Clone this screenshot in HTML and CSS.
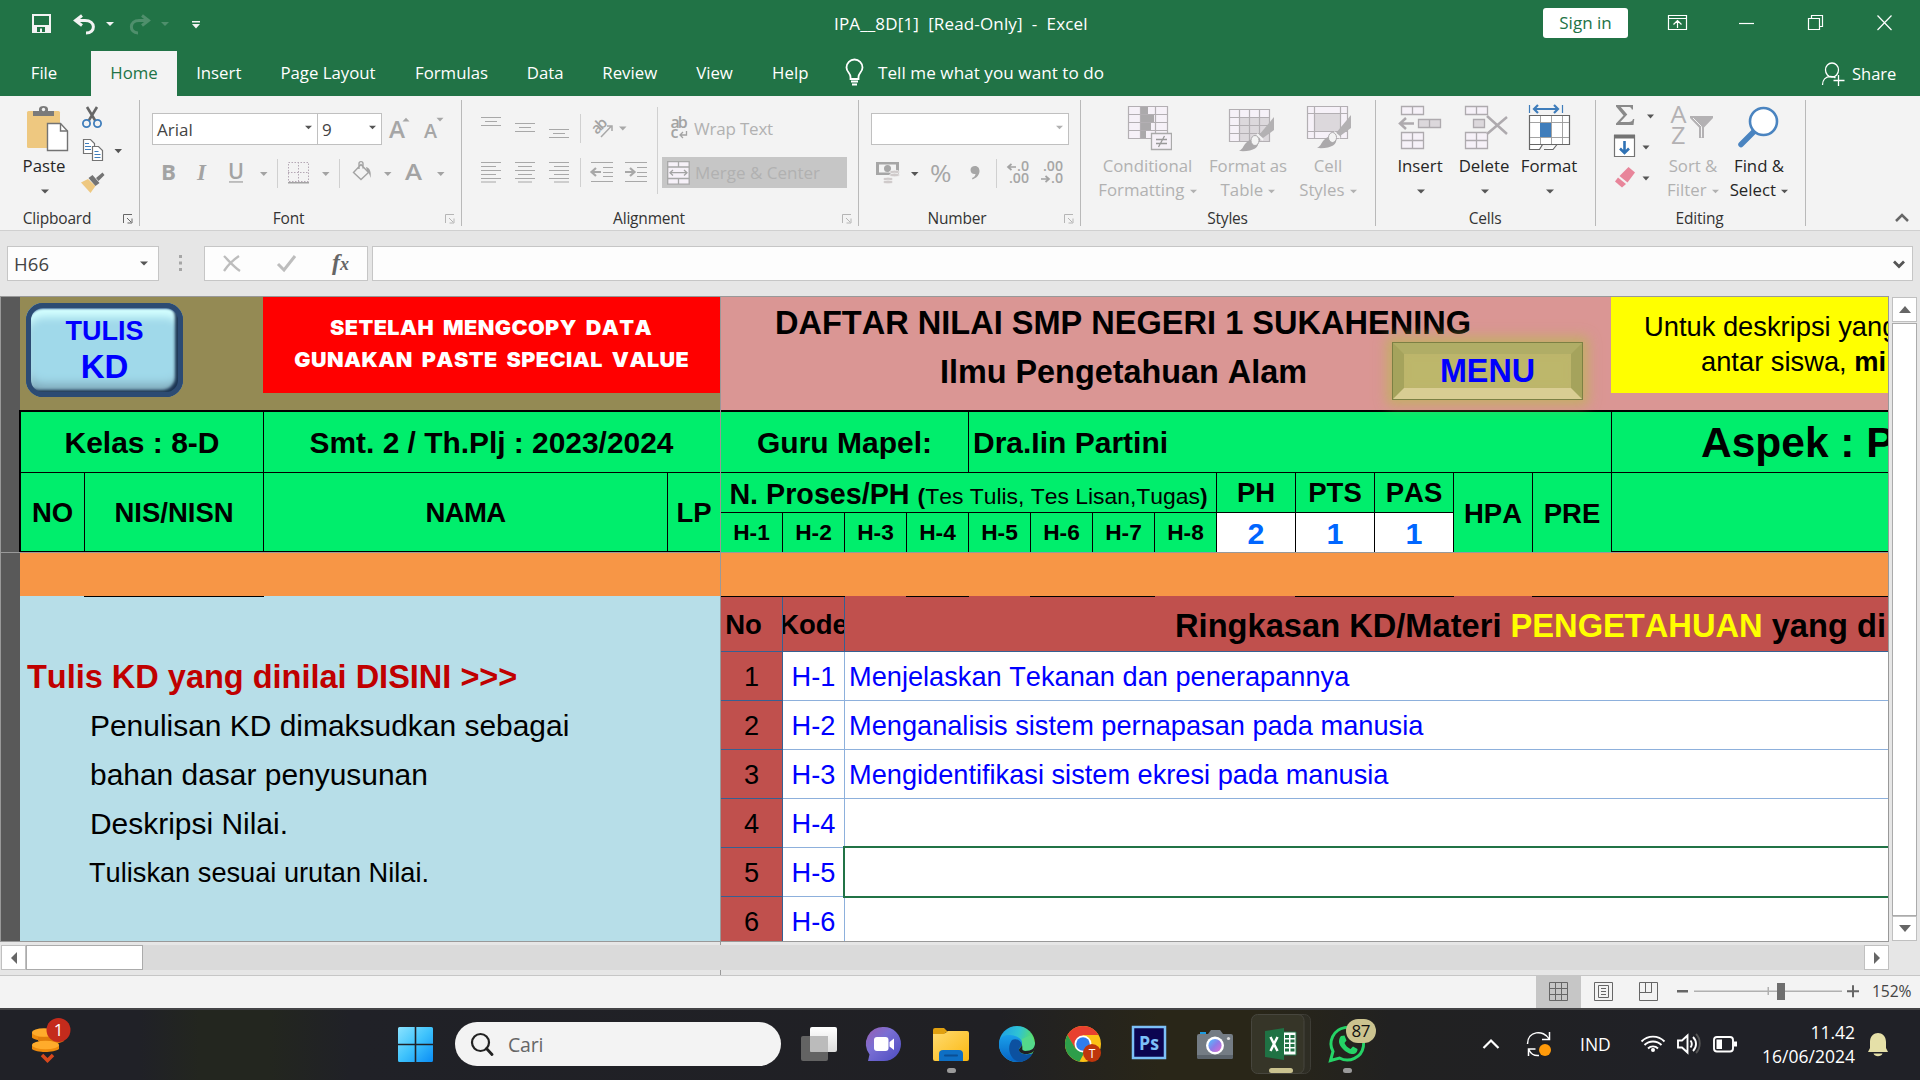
FILE: index.html
```html
<!DOCTYPE html>
<html lang="en">
<head>
<meta charset="utf-8">
<title>IPA__8D[1] [Read-Only] - Excel</title>
<link rel="stylesheet" href="styles.css">
</head>
<body>
<svg class="defs" width="0" height="0" aria-hidden="true">
  <defs>
    <symbol id="caret" viewBox="0 0 8 5"><path d="M0 .5h8L4 4.5z"/></symbol>
    <symbol id="launch" viewBox="0 0 10 10"><path d="M.5 9V.5H9M4 4l4 4M9 4.500V9H4.500" fill="none" stroke="currentColor"/></symbol>
    <linearGradient id="gWin" x1="0" y1="0" x2="1" y2="1"><stop offset="0" stop-color="#8be3ff"/><stop offset=".5" stop-color="#3fc3fc"/><stop offset="1" stop-color="#0a8df5"/></linearGradient>
    <linearGradient id="gTask" x1="0" y1="0" x2="0" y2="1"><stop offset="0" stop-color="#fff"/><stop offset="1" stop-color="#dcdcdc"/></linearGradient>
    <linearGradient id="gChat" x1="0" y1="0" x2="1" y2="1"><stop offset="0" stop-color="#9a5fb0"/><stop offset=".4" stop-color="#7a6fd4"/><stop offset="1" stop-color="#4b4bc0"/></linearGradient>
    <linearGradient id="gFold" x1="0" y1="0" x2="1" y2="1"><stop offset="0" stop-color="#ffdb70"/><stop offset="1" stop-color="#fbb810"/></linearGradient>
    <linearGradient id="gEdge" x1="0" y1="0" x2="1" y2=".3"><stop offset="0" stop-color="#1c9ce8"/><stop offset=".55" stop-color="#2fc3d4"/><stop offset="1" stop-color="#5fe05a"/></linearGradient>
    <linearGradient id="gEdge2" x1="0" y1="0" x2="0" y2="1"><stop offset="0" stop-color="#1aa0ea"/><stop offset="1" stop-color="#0663c4"/></linearGradient>
    <linearGradient id="gCam" x1="0" y1="0" x2="1" y2="1"><stop offset="0" stop-color="#4cc3ff"/><stop offset=".5" stop-color="#8d7be8"/><stop offset="1" stop-color="#e06bd0"/></linearGradient>
  </defs>
</svg>

<header class="titlebar">
  <svg class="qat" viewBox="0 0 220 51" width="220" height="51">
    <g fill="none" stroke="#f3f3f3">
      <path d="M33 15h17v17H33z" stroke-width="2"/>
      <path d="M33 25.500h17v6.500H33z" fill="#f3f3f3"/>
    </g>
    <path d="M37 27h8v5h-3v-3.500h-2V32h-3z" fill="#217346"/>
    <path d="M77 20.500h8c11 0 11 12.500 1 12.500M82 15.500l-6.500 5 6.500 5" fill="none" stroke="#f3f3f3" stroke-width="3"/>
    <path d="M106 22h8l-4 4z" fill="#f3f3f3"/>
    <g fill="#4f8f6c"><path d="M147 20.500h-8c-10 0-10 12.500-1 12.500M142 15.500l6.500 5-6.500 5" fill="none" stroke="#4f8f6c" stroke-width="3"/><path d="M161 22h8l-4 4z"/></g>
    <path d="M192 21h8v1.500h-8zM192 24h8l-4 4.500z" fill="#f3f3f3"/>
  </svg>
  <div class="doc-title">IPA__8D[1]&nbsp; [Read-Only]&nbsp; -&nbsp; Excel</div>
  <button class="signin">Sign in</button>
  <svg class="winctl" viewBox="1628 0 292 38" width="292" height="38" fill="none" stroke="#fff" stroke-width="1.200">
    <path d="M1668.500 15.500h18v14h-18zM1668.500 18.500h18M1677.500 28v-7.500M1673.500 24.500l4-4 4 4"/>
    <path d="M1739 23.500h15"/>
    <path d="M1808.500 18.500h11v11h-11zM1811.500 18v-2.500h11v11h-2.500"/>
    <path d="M1877.500 15.500l14 14.500M1891.500 15.500l-14 14.500"/>
  </svg>
</header>

<nav class="tabs">
  <span class="t-file">File</span><span class="gap"></span><span class="active">Home</span><span>Insert</span><span>Page Layout</span><span>Formulas</span><span>Data</span><span>Review</span><span>View</span><span>Help</span>
  <svg viewBox="828 51 50 45" width="50" height="45" fill="none" stroke="#fff" stroke-width="1.800"><path d="M850.500 79v-2c0-4-4-5-4-9.500a8 8 0 0 1 16 0c0 4.500-4 5.500-4 9.500v2zM851 81.500h7M852 84.500h5"/></svg>
  <span class="tell">Tell me what you want to do</span>
  <svg viewBox="1814 51 36 45" width="36" height="45" fill="none" stroke="#fff" stroke-width="1.300"><ellipse cx="1832" cy="70" rx="6.500" ry="7"/><path d="M1822.500 85c0-5 3-8.500 8-8.500 2 0 4 .5 5 1.500M1838.500 75v11M1833.500 80.500h11"/></svg>
  <span class="share">Share</span>
</nav>

<section class="ribbon">
  <div class="group g-clip">
    <div class="body">
      <div class="big paste">
        <svg viewBox="20 96 50 57" width="50" height="57"><rect x="27" y="111" width="33" height="37" rx="1.500" fill="#eec880"/><path d="M33 116v-5h6v-2c0-2 2-3 4.500-3s4.500 1 4.500 3v2h6v5z" fill="#7a7a7a"/><circle cx="43.500" cy="109.500" r="1.700" fill="#f3f3f3"/><path d="M47.500 123.500h13l7 7.500v19.500h-20z" fill="#fff" stroke="#737373" stroke-width="1.400"/><path d="M60.500 123.500v7.500h7" fill="none" stroke="#737373" stroke-width="1.400"/></svg>
        <span>Paste</span><span><svg class="car" width="8" height="5"><use href="#caret"/></svg></span>
      </div>
      <svg viewBox="76 96 52 104" width="52" height="104">
        <path d="M87 107l8.500 14M97 107l-8.500 14" stroke="#666" stroke-width="2.600" fill="none"/>
        <g fill="none" stroke="#3f7dbb" stroke-width="1.800"><circle cx="86.500" cy="123.500" r="3.600"/><circle cx="97.500" cy="123.500" r="3.600"/></g>
        <g fill="#fff" stroke="#737373" stroke-width="1.200"><path d="M83.500 139.500h7l4 4v10h-11z"/><path d="M92.500 146.500h6l4 4v10h-10z"/></g>
        <path d="M85 143.500h4M85 146.500h6M85 149.500h6M94.500 151.500h4M94.500 154.500h6M94.500 157.500h6" stroke="#3f7dbb" stroke-width="1.200"/>
        <path d="M114.500 149h7.500l-3.700 4.300z" fill="#555"/>
        <path d="M81 182.500l7-3.500 7.500 7-5 7z" fill="#eec880"/><path d="M88.500 178l4-3 7 8-4 3zM96 178l6.500-5.500 2 2.500-6 6z" fill="#737373"/>
      </svg>
    </div>
    <div class="cap">Clipboard<svg class="lch dark" width="10" height="10"><use href="#launch"/></svg></div>
  </div>

  <div class="group g-font">
    <div class="body col">
      <div class="row1">
        <div class="combo fam">Arial<svg class="car" width="7" height="5"><use href="#caret"/></svg></div><div class="combo size">9<svg class="car" width="7" height="5"><use href="#caret"/></svg></div>
        <svg viewBox="382 108 70 37" width="70" height="37"><g fill="#a6a6a6"><text x="389" y="138" font-size="24" class="ic sb" textLength="16" lengthAdjust="spacingAndGlyphs">A</text><path d="M402.500 121.500h7l-3.500-3.800z"/><text x="424" y="138" font-size="19" class="ic sb" textLength="13" lengthAdjust="spacingAndGlyphs">A</text><path d="M436.500 117.700h7l-3.500 3.800z"/></g></svg>
      </div>
      <svg viewBox="152 156 305 34" width="305" height="34" fill="#a3a3a3">
        <text x="161" y="180" font-size="22" class="ic b" textLength="15" lengthAdjust="spacingAndGlyphs">B</text><text x="197" y="180" font-size="23" class="serif" font-style="italic" font-weight="bold">I</text><text x="228" y="179" font-size="21" class="ic sb" textLength="16" lengthAdjust="spacingAndGlyphs">U</text><path d="M229 181.300h14v1.300h-14z"/>
        <path d="M260 172h7.500l-3.700 4zM322 172h7.500l-3.700 4zM384 172h7.500l-3.700 4zM437 172h7.500l-3.700 4z"/>
        <path d="M277 159h1v29h-1zM339 159h1v29h-1z" fill="#d0d0d0"/>
        <path d="M288.500 162.500h20v19h-20zM298.500 162v20M288 172.500h21" fill="none" stroke="#b5a8b5" stroke-dasharray="1.500 1.500"/><path d="M288 182h21v1.500h-21z"/>
        <path d="M353.500 172.500l7.500-8 7.500 8-7.500 7zM359 169v-5.500c0-2.500 4-2.500 4 0v5" fill="none" stroke="#a3a3a3" stroke-width="1.400"/><path d="M366 167c4 1 5.500 5 4.500 11-1-4-2-6-3.500-7z"/>
        <text x="405" y="180" font-size="22" class="ic sb" textLength="17" lengthAdjust="spacingAndGlyphs">A</text>
      </svg>
    </div>
    <div class="cap">Font<svg class="lch" width="10" height="10"><use href="#launch"/></svg></div>
  </div>

  <div class="group g-align">
    <div class="body">
      <svg viewBox="475 96 183 104" width="183" height="104">
        <g stroke="#a8a8a8" stroke-width="1.200" fill="none">
          <path d="M481 117.500h20M485 121.500h12M481 125.500h20M515 123.500h20M519 127.500h12M515 131.500h20M549 129.500h20M553 133.500h12M549 137.500h20"/>
          <path d="M481 162.500h20M481 166.500h15M481 170.500h20M481 174.500h15M481 178.500h20M481 182h15M515 162.500h20M518 166.500h14M515 170.500h20M518 174.500h14M515 178.500h20M518 182h14M549 162.500h20M554 166.500h15M549 170.500h20M554 174.500h15M549 178.500h20M554 182h15"/>
          <path d="M591 162.500h22M603 167.500h10M603 172.500h10M603 176.500h10M591 181.500h22M625 162.500h22M637 167.500h10M637 172.500h10M637 176.500h10M625 181.500h22"/>
          <path d="M601 172h-9M596 168l-4.500 4 4.500 4M625 172h8.500M630 168l4.500 4-4.500 4" stroke-width="2.200"/>
          <path d="M601 137l10.500-11M607 126h5v5" stroke-width="1.500"/>
        </g>
        <text x="0" y="0" font-size="15" class="ic sb" fill="#a3a3a3" transform="translate(597 135) rotate(-45)" textLength="16">ab</text>
        <path d="M619 126.500h7.500l-3.700 4z" fill="#a8a8a8"/>
        <path d="M580 114h1v29h-1zM580 158h1v29h-1zM657 107h1v87h-1z" fill="#d0d0d0"/>
      </svg>
      <div class="wrapcol">
        <div class="wraptext"><svg viewBox="670 113 20 28" width="20" height="28" fill="#a3a3a3"><text x="670.500" y="128" font-size="16" class="ic sb" textLength="17">ab</text><text x="670.500" y="138" font-size="16" class="ic sb">c</text><path d="M686.500 131v4h-6M683 132l-3 3 3 3" fill="none" stroke="#a3a3a3" stroke-width="1.300"/></svg>Wrap Text</div>
        <div class="merge"><svg viewBox="667 160 23 24" width="23" height="24"><path d="M667.700 160.700h21.500v22.500h-21.500zM678.500 161v5M678.500 178v5M668 166h21.500M668 177.500h21.500" fill="#f6f1f8" stroke="#a8a8a8" stroke-width="1.300"/><path d="M670 171.700h17M673 169l-3 2.700 3 2.700M684 169l3 2.700-3 2.700" fill="none" stroke="#a3a3a3" stroke-width="1.300"/></svg>Merge &amp; Center</div>
      </div>
    </div>
    <div class="cap">Alignment<svg class="lch" width="10" height="10"><use href="#launch"/></svg></div>
  </div>

  <div class="group g-num">
    <div class="body col">
      <div class="row1"><div class="combo num"><svg class="car" width="7" height="5"><use href="#caret"/></svg></div></div>
      <svg viewBox="871 156 200 34" width="200" height="34" fill="#a6a6a6">
        <path d="M876 162h23v13h-23z"/><path d="M879 164.500h17v8h-17z" fill="#f3f3f3"/><circle cx="887.500" cy="168.500" r="3.500"/><g fill="#cfcaca" stroke="#f3f3f3" stroke-width=".7"><ellipse cx="894.500" cy="172" rx="5" ry="1.800"/><ellipse cx="894.500" cy="175" rx="5" ry="1.800"/><ellipse cx="888" cy="179" rx="5" ry="1.800"/><ellipse cx="888" cy="182" rx="5" ry="1.800"/></g>
        <path d="M911 172h7.500l-3.700 4z" fill="#555"/>
        <text x="930" y="182" font-size="24" class="ic" textLength="21.500" lengthAdjust="spacingAndGlyphs">%</text>
        <path d="M975 166c3 0 4.500 2.500 4.500 5 0 4-3 7-7 8.500l-.5-1.500c2.500-1 3.500-2.500 3.500-4-3 .5-5-1.500-5-4s2-4 4.500-4z"/>
        <path d="M996 159h1v29h-1z" fill="#d0d0d0"/>
        <g font-size="13.500" class="ic sb"><text x="1017" y="171" textLength="12" lengthAdjust="spacingAndGlyphs">.0</text><text x="1009" y="183" textLength="20" lengthAdjust="spacingAndGlyphs">.00</text><text x="1043" y="171" textLength="20" lengthAdjust="spacingAndGlyphs">.00</text><text x="1051" y="183" textLength="12" lengthAdjust="spacingAndGlyphs">.0</text></g>
        <path d="M1016 167h-7M1011.500 164l-3.500 3 3.500 3M1041 179h7M1045.500 176l3.500 3-3.500 3" fill="none" stroke="#a3a3a3" stroke-width="1.700"/>
      </svg>
    </div>
    <div class="cap">Number<svg class="lch" width="10" height="10"><use href="#launch"/></svg></div>
  </div>

  <div class="group g-styles">
    <div class="body">
      <div class="big dim w113">
        <svg viewBox="1125 96 48 57" width="48" height="57"><path d="M1129.500 106.500h39v32h-39zM1129.500 114.500h39M1129.500 122.500h39M1129.500 130.500h39M1141.500 106v32M1156.500 106v32" fill="#f6f1f8" stroke="#b3afb3" stroke-width="1.200"/><path d="M1142 107h7v7h-7zM1142 115h13v7h-13zM1142 123h10v7h-10zM1142 131h5v7h-5z" fill="#aba9ab"/><path d="M1152.500 133.500h20v16h-20z" fill="#f6f1f8" stroke="#aaa" stroke-width="1.300"/><path d="M1157 139.500h11M1157 143.500h11M1165.500 136l-6 11" stroke="#999" stroke-width="1.300"/></svg>
        <span class="ls-cond">Conditional</span><span>Formatting <svg class="car" width="7" height="5"><use href="#caret"/></svg></span>
      </div>
      <div class="big dim w88">
        <svg viewBox="1223 96 52 57" width="52" height="57"><path d="M1230.500 109.500h40v32h-40z" fill="#f6f1f8"/><path d="M1240.500 117.500h30v24h-30z" fill="#dcd8dc"/><path d="M1230.500 109.500h40v32h-40zM1230.500 117.500h40M1230.500 125.500h40M1230.500 133.500h40M1240.500 109v32M1250.500 109v32M1260.500 109v32" fill="none" stroke="#b3afb3" stroke-width="1.200"/><path d="M1275 117v13l-11 8-4-3z" fill="#b3b1b3"/><path d="M1258 134l6 6" stroke="#f3f3f3" stroke-width="2"/><path d="M1240 151c4-2 4-5 7-8 3-4 9-5 12-2 2 7-6 11-19 10z" fill="#aba9ab"/><ellipse cx="1256" cy="140.500" rx="4" ry="5" fill="#f3f3f3" stroke="#aba9ab"/></svg>
        <span class="ls-fmt">Format as</span><span>Table <svg class="car" width="7" height="5"><use href="#caret"/></svg></span>
      </div>
      <div class="big dim w72">
        <svg viewBox="1303 96 52 57" width="52" height="57"><path d="M1308.500 106.500h40v32h-40z" fill="#f6f1f8"/><path d="M1315.500 113.500h26v18h-26z" fill="#dcd8dc"/><path d="M1308.500 106.500h40v32h-40zM1308.500 113.500h40M1308.500 131.500h40M1315.500 106v32M1341.500 106v32" fill="none" stroke="#b3afb3" stroke-width="1.200"/><path d="M1352 115v13l-11 8-4-3z" fill="#b3b1b3"/><path d="M1335 132l6 6" stroke="#f3f3f3" stroke-width="2"/><path d="M1318 148c4-2 4-5 7-8 3-4 9-5 12-2 2 7-6 11-19 10z" fill="#aba9ab"/><ellipse cx="1333.500" cy="137.500" rx="4" ry="5" fill="#f3f3f3" stroke="#aba9ab"/></svg>
        <span>Cell</span><span>Styles <svg class="car" width="7" height="5"><use href="#caret"/></svg></span>
      </div>
    </div>
    <div class="cap">Styles</div>
  </div>

  <div class="group g-cells">
    <div class="body">
      <div class="big w64">
        <svg viewBox="1396 96 48 57" width="48" height="57"><g fill="#f6f1f8" stroke="#aeaaae" stroke-width="1.300"><path d="M1401.500 106.500h22v8h-22zM1412.500 106.500v8M1401.500 132.500h22v16h-22zM1412.500 132.500v16M1401.500 140.500h22"/><path d="M1418.500 119.500h22v8h-22zM1429.500 119.500v8" fill="#dcd8dc"/></g><path d="M1414 123.500h-13M1406 118l-6 5.500 6 5.500" fill="none" stroke="#aeaaae" stroke-width="2.500"/></svg>
        <span>Insert</span><span><svg class="car" width="8" height="5"><use href="#caret"/></svg></span>
      </div>
      <div class="big w64">
        <svg viewBox="1459 96 50 57" width="50" height="57"><g fill="#f6f1f8" stroke="#aeaaae" stroke-width="1.300"><path d="M1465.500 106.500h22v8h-22zM1476.500 106.500v8M1465.500 132.500h22v16h-22zM1476.500 132.500v16M1465.500 140.500h22"/><path d="M1473.500 119.500h11v8h-11z" fill="#dcd8dc"/></g><path d="M1487 117l19 17M1507 117l-19 17" fill="none" stroke="#f3f3f3" stroke-width="5"/><path d="M1487 116l20 18M1507 117l-20 17" fill="none" stroke="#aeaaae" stroke-width="2.500"/></svg>
        <span>Delete</span><span><svg class="car" width="8" height="5"><use href="#caret"/></svg></span>
      </div>
      <div class="big w66">
        <svg viewBox="1525 96 48 57" width="48" height="57"><path d="M1529.500 105v8M1562.500 105v8" stroke="#3f7dbb" stroke-width="1.200"/><path d="M1534 109h24M1538 105l-4 4 4 4M1554 105l4 4-4 4" fill="none" stroke="#3f7dbb" stroke-width="2.200"/><path d="M1529.500 115.500h40v29h-40zM1529.500 144.500v5h10l3-5M1544 149.500h9l4-5" fill="#fff" stroke="#666" stroke-width="1.200"/><path d="M1530 122.500h39M1530 137.500h39M1540.500 116v28M1551.500 116v28M1562.500 116v28" stroke="#999" stroke-width=".9"/><path d="M1540 123h11v14h-11z" fill="#3f7dbb"/></svg>
        <span>Format</span><span><svg class="car" width="8" height="5"><use href="#caret"/></svg></span>
      </div>
    </div>
    <div class="cap">Cells</div>
  </div>

  <div class="group g-edit">
    <div class="body">
      <svg viewBox="1607 96 52 104" width="52" height="104">
        <path d="M1616 105h17v4.500h-1.200c-.5-2-1.500-2.500-3.500-2.500h-7.500l6.500 7.500-7 7.500h8.500c2.500 0 3.500-.8 4.200-3h1.300l-.8 6H1616v-1.500l7.500-8-7.500-9z" fill="#8a8a8a"/>
        <path d="M1647 114.500h7l-3.500 4zM1642.500 145.500h7l-3.500 4zM1642.500 176.500h7l-3.500 4z" fill="#555"/>
        <path d="M1614.500 135.500h20v21h-20z" fill="#fff" stroke="#737373" stroke-width="1.200"/><path d="M1614 134.500h21v4h-21z" fill="#737373"/><path d="M1624.500 141v11M1620 148.500l4.500 4.500 4.500-4.500" fill="none" stroke="#2f72b5" stroke-width="2.600"/>
        <path d="M1628.500 167l6.500 5.500-7.500 10-8-6.500z" fill="#e8859a"/><path d="M1618 177.500l8 6.500-4 3.500-7-6z" fill="#e8859a"/>
      </svg>
      <div class="big dim w68">
        <svg viewBox="1667 96 52 57" width="52" height="57" fill="#b3b1b3"><text x="1670.500" y="123" font-size="23" class="ic" textLength="16" lengthAdjust="spacingAndGlyphs">A</text><text x="1671" y="144" font-size="23" class="ic" textLength="14.500" lengthAdjust="spacingAndGlyphs">Z</text><path d="M1690 116h23v2l-9 9.500v10.500h-5v-10.500l-9-9.500z"/><path d="M1693 118l8.500 8.500v11" fill="none" stroke="#f3f3f3"/></svg>
        <span>Sort &amp;</span><span>Filter <svg class="car" width="7" height="5"><use href="#caret"/></svg></span>
      </div>
      <div class="big w68">
        <svg viewBox="1735 96 48 57" width="48" height="57"><path d="M1741 144.500l14-14" stroke="#4a84c0" stroke-width="5.500" stroke-linecap="round"/><circle cx="1763.500" cy="121.500" r="13.500" fill="#fff" stroke="#4a84c0" stroke-width="2.600"/></svg>
        <span>Find &amp;</span><span>Select <svg class="car" width="7" height="5"><use href="#caret"/></svg></span>
      </div>
    </div>
    <div class="cap">Editing</div>
  </div>
  <svg class="collapse" width="14" height="10" viewBox="0 0 14 10"><path d="M1 8l6-6 6 6" fill="none" stroke="#666" stroke-width="2.500"/></svg>
</section>

<section class="fbar">
  <div class="namebox">H66<svg class="car" width="8" height="5"><use href="#caret"/></svg></div>
  <svg class="dots" width="3" height="16" fill="#a6a6a6"><path d="M0 0h3v3H0zM0 6.500h3v3H0zM0 13h3v3H0z"/></svg>
  <div class="fx"><svg viewBox="205 247 162 33" width="162" height="33"><path d="M224 256c5 5 10 11 16 15M239 256c-6 4-11 9-15 15" fill="none" stroke="#bdbdbd" stroke-width="2.300"/><path d="M278 264l6 6 11-14" fill="none" stroke="#bdbdbd" stroke-width="3"/><g class="serif" fill="#666" font-style="italic" font-weight="bold"><text x="332" y="270" font-size="24">f</text><text x="340" y="270" font-size="18">x</text></g></svg></div>
  <div class="finput"><svg width="12" height="9" viewBox="0 0 12 9"><path d="M1 1.500l5 5 5-5" fill="none" stroke="#555" stroke-width="2.800"/></svg></div>
</section>

<main class="work">
  <div class="sheet">
    <div class="gutter"><i></i></div>
    <div class="pane left">
      <div class="top khaki">
        <div class="kdcell"><div class="kdbtn"><span>TULIS</span><b>KD</b></div></div>
        <div class="redbox"><span>SETELAH MENGCOPY DATA</span><span>GUNAKAN PASTE SPECIAL VALUE</span></div>
      </div>
      <div class="hdr lefthdr">
        <div class="c kelas">Kelas : 8-D</div><div class="c smt">Smt. 2 / Th.Plj : 2023/2024</div>
        <div class="c h">NO</div><div class="c h">NIS/NISN</div><div class="c h nama">NAMA</div><div class="c h lp">LP</div>
      </div>
      <div class="freeze"></div>
      <div class="orange"></div>
      <div class="notes"><i class="seg"></i>
        <h2>Tulis KD yang dinilai DISINI &gt;&gt;&gt;</h2>
        <p>Penulisan KD dimaksudkan sebagai</p><p>bahan dasar penyusunan</p><p>Deskripsi Nilai.</p><p class="sm">Tuliskan sesuai urutan Nilai.</p>
      </div>
    </div>
    <div class="split"></div>
    <div class="pane right">
      <div class="top pink">
        <div class="titles"><div class="l1">DAFTAR NILAI SMP NEGERI 1 SUKAHENING</div><div class="l2">Ilmu Pengetahuan Alam</div></div>
        <div class="yellow"><div class="y1">Untuk deskripsi yang</div><div class="y2">antar siswa, <b>mi</b></div></div>
        <div class="menubtn">MENU</div>
      </div>
      <div class="hdr righthdr">
        <div class="c guru">Guru Mapel:</div><div class="c dra">Dra.Iin Partini</div><div class="c aspek">Aspek : P</div>
        <div class="c nproses"><b>N. Proses/PH&nbsp;</b><span><b>(</b>Tes Tulis, Tes Lisan,Tugas<b>)</b></span></div>
        <div class="c p">PH</div><div class="c p">PTS</div><div class="c p">PAS</div>
        <div class="c h tall hpa">HPA</div><div class="c h tall pre">PRE</div><div class="c h tall end"></div>
        <div class="c s">H-1</div><div class="c s">H-2</div><div class="c s">H-3</div><div class="c s">H-4</div><div class="c s">H-5</div><div class="c s">H-6</div><div class="c s">H-7</div><div class="c s">H-8</div>
        <div class="c v">2</div><div class="c v">1</div><div class="c v">1</div>
      </div>
      <div class="freeze"></div>
      <div class="orange"></div>
      <div class="kd">
        <svg class="segs" width="1167" height="1" viewBox="721 0 1167 1"><path d="M721 0h124v1H721zM906 0h63v1h-63zM1030 0h125v1h-125zM1295 0h159v1h-159zM1532 0h356v1h-356z"/></svg>
        <div class="kh n">No</div><div class="kh k"><span>Kode</span></div><div class="kh m">Ringkasan KD/Materi&nbsp;<em>PENGETAHUAN</em>&nbsp;yang di</div>
        <div class="n">1</div><div class="k">H-1</div><div class="m">Menjelaskan Tekanan dan penerapannya</div>
        <div class="n">2</div><div class="k">H-2</div><div class="m">Menganalisis sistem pernapasan pada manusia</div>
        <div class="n">3</div><div class="k">H-3</div><div class="m">Mengidentifikasi sistem ekresi pada manusia</div>
        <div class="n">4</div><div class="k">H-4</div><div class="m"></div>
        <div class="n">5</div><div class="k">H-5</div><div class="m sel"></div>
        <div class="n">6</div><div class="k">H-6</div><div class="m"></div>
      </div>
    </div>
  </div>
  <div class="vscroll"><div class="sbtn"><svg width="12" height="7"><path d="M0 7h12L6 0z" fill="#666"/></svg></div><div class="vthumb"></div><div class="sbtn dn"><svg width="12" height="7"><path d="M0 0h12L6 7z" fill="#666"/></svg></div></div>
</main>

<div class="hscroll">
  <div class="htrack"><div class="sbtn"><svg width="6" height="12"><path d="M6 0v12L0 6z" fill="#666"/></svg></div><div class="hthumb"></div><div class="sbtn r"><svg width="6" height="12"><path d="M0 0v12l6-6z" fill="#666"/></svg></div></div>
</div>

<div class="status">
  <div class="view on"><svg width="19" height="19" viewBox="0 0 19 19" fill="none" stroke="#666"><path d="M.5.5h18v18H.5zM6.500 0v19M12.500 0v19M0 6.500h19M0 12.500h19"/></svg></div>
  <div class="view"><svg width="19" height="19" viewBox="0 0 19 19" fill="none" stroke="#666"><path d="M.5.5h18v18H.5zM4.500 3.500h10v12h-10zM7 6.500h5M7 9.500h5M7 12.500h5"/></svg></div>
  <div class="view"><svg width="19" height="19" viewBox="0 0 19 19" fill="none" stroke="#666"><path d="M.5.5h18v18H.5zM6.500 0v10.500h6V0M0 10.500h12.500"/></svg></div>
  <svg class="zoom" viewBox="1671 976 196 32" width="196" height="32"><path d="M1677 990h11v2.500h-11zM1847 990.200h12v2h-12zM1852 985.200h2v12h-2z" fill="#666"/><path d="M1694 990.500h148v1.500h-148zM1767.500 987h1.500v8h-1.500z" fill="#b0b0b0"/><path d="M1777 983h8v17h-8z" fill="#6e6e6e"/></svg>
  <span class="pct">152%</span>
</div>

<footer class="taskbar">
  <svg class="coins" viewBox="28 1010 50 70" width="50" height="70">
    <g><ellipse cx="44" cy="1036" rx="12" ry="4" fill="#ffa51e"/><path d="M32 1032.500v5c3 4 20 4 24 0v-5z" fill="#ee8a0c"/><ellipse cx="44" cy="1032.500" rx="12" ry="4.200" fill="#ffab2b"/><path d="M38 1041c6 4 20 4 26 0v-4H38z" fill="#e07c0a"/><path d="M32 1045v4c4 4 22 4 27 0v-4z" fill="#ee8a0c"/><ellipse cx="45.500" cy="1045" rx="13.500" ry="4.200" fill="#ffab2b"/></g>
    <path d="M42 1055l5.500 5.500 5.500-5.500" fill="none" stroke="#d8481c" stroke-width="3.500"/>
    <circle cx="58.500" cy="1030" r="12" fill="#c42b1c"/><text x="58.500" y="1036" font-size="17" text-anchor="middle" class="ic" fill="#fff">1</text>
  </svg>
  <svg class="win" viewBox="398 1027 35 35" width="35" height="35" fill="url(#gWin)"><path d="M398 1028.500q0-1.500 1.500-1.500h15.200v16.700H398zM416.300 1027h15.200q1.500 0 1.500 1.500v15.200h-16.700zM398 1045.300h16.700v16.700h-15.200q-1.500 0-1.500-1.500zM416.300 1045.300H433v15.200q0 1.500-1.500 1.500h-15.200z"/></svg>
  <div class="search"><svg width="24" height="24" viewBox="0 0 24 24" fill="none" stroke="#222" stroke-width="2.200"><circle cx="10.500" cy="10.500" r="8.500"/><path d="M16.500 16.500l5.500 6" stroke-linecap="round" stroke-width="2.800"/></svg>Cari</div>
  <svg class="apps" viewBox="790 1010 600 70" width="600" height="70">
    <rect x="801" y="1036" width="27" height="25" rx="2" fill="#636363"/><rect x="810" y="1027" width="27" height="25" rx="2" fill="url(#gTask)"/><path d="M810 1036h18v16h-16.500q-1.500 0-1.500-1.500z" fill="#bbb"/>
    <path d="M884 1027a17 17 0 0 1 0 34h-16l1.500-6.500A17 17 0 0 1 884 1027z" fill="url(#gChat)"/><rect x="874" y="1037" width="14.500" height="14" rx="3" fill="#fff"/><path d="M889.500 1042l4.500-3.500v11.500l-4.500-3.500z" fill="#fff"/>
    <path d="M933 1030q0-2 2-2h9l4 4h-2l-2 3h-11z" fill="#e0a010"/><path d="M933 1034h11l4-3h19q2 0 2 2v26q0 2-2 2h-32q-2 0-2-2z" fill="url(#gFold)"/><path d="M939 1061v-7q0-4 4-4h16q4 0 4 4v7z" fill="#0e6fc4"/><rect x="944" y="1054.500" width="14" height="2" rx="1" fill="#0a4f94"/>
    <circle cx="1017" cy="1044" r="18" fill="url(#gEdge)"/><path d="M999 1044c0-10 10-10 16-8 6 2 8 6 7 9-1 2-3 2-3 5 0 4 8 6 14 3-4 6-9 9-16 9-10 0-18-8-18-18z" fill="url(#gEdge2)"/><path d="M1012 1040c-6 8-2 20 8 22 6-.5 10-4 13-9-6 3-14 1-14-3 0-3 2-3 3-5-1-5-6-7-10-5z" fill="#0c51a0"/><path d="M1019 1050c0-2 3-3 3-6 6 0 9 4 13 0 1 8-4 10-9 10-4 0-7-2-7-4z" fill="#201f24"/><path d="M1022 1045c1 4-1 5 3 6 7 0 10-3 10-8l-4-8-9 4z" fill="#54d98a"/>
    <circle cx="1083" cy="1044" r="18" fill="#fbc116"/><path d="M1067.400 1035a18 18 0 0 1 31.200 0H1083l-8 13.500z" fill="#e8402f"/><path d="M1067.400 1035l8 13.500 9 4-5 9.200A18 18 0 0 1 1067.400 1035z" fill="#2d9e4a"/><circle cx="1083" cy="1044" r="8.500" fill="#fff"/><circle cx="1083" cy="1044" r="6.800" fill="#2f7ded"/><circle cx="1092" cy="1053" r="9" fill="#bf360c"/><text x="1092" y="1057.500" font-size="12" class="ic" fill="#fff" text-anchor="middle">T</text>
    <rect x="1133" y="1027" width="32" height="31" fill="#0b0450" stroke="#7cc0f8" stroke-width="2.500"/><text x="1139" y="1050" font-size="19" class="ic b" fill="#7cc0f8" textLength="20" lengthAdjust="spacingAndGlyphs">Ps</text>
    <path d="M1200 1032h6v4h-6z" fill="#1b9be0"/><path d="M1199 1034h9l3-4h9l3 4h8q2 0 2 2v21q0 2-2 2h-32q-2 0-2-2v-21q0-2 2-2z" fill="#747c84"/><path d="M1197 1055h36v2q0 2-2 2h-32q-2 0-2-2z" fill="#5c646c"/><circle cx="1215" cy="1045.500" r="9" fill="#fff"/><circle cx="1215" cy="1045.500" r="6.600" fill="url(#gCam)"/><circle cx="1228.500" cy="1038.500" r="1.600" fill="#ddd"/>
    <rect x="1258" y="1014.500" width="52.500" height="59" rx="6" fill="#2e2d24" stroke="#3e3d36"/><rect x="1251.500" y="1014.500" width="52.500" height="59" rx="6" fill="#363528" stroke="#47463e"/>
    <path d="M1282 1032h14v23h-14z" fill="#fff" stroke="#1f7244"/><path d="M1285 1035h4v3h-4zM1290.500 1035h4v3h-4zM1285 1039.500h4v3h-4zM1290.500 1039.500h4v3h-4zM1285 1044h4v3h-4zM1290.500 1044h4v3h-4zM1285 1048.500h4v3h-4zM1290.500 1048.500h4v3h-4z" fill="#1f7244"/><path d="M1265 1031l19-3v32l-19-3z" fill="#1f7244"/><path d="M1270.500 1037l7 14M1277.500 1037l-7 14" stroke="#fff" stroke-width="2.500"/>
    <rect x="1269" y="1068" width="24" height="5" rx="2.500" fill="#cbc38f"/><rect x="947" y="1068" width="9" height="5" rx="2.500" fill="#9a9a9a"/><rect x="1343" y="1068" width="9" height="5" rx="2.500" fill="#9a9a9a"/>
    <path d="M1330.500 1060.500l2.500-9a16.300 16.300 0 1 1 6.500 6.500z" fill="none" stroke="#25d366" stroke-width="3"/><path d="M1341 1036l3.500-.5 2 5-2 2.500c1 2.500 3 4.500 6 6l2.500-2.500 4.500 2.500c0 4-3 5.500-6 5-6-1-12-7.500-12.500-12 0-2.500.5-4.500 2-6z" fill="#25d366"/>
    <rect x="1346" y="1019" width="30" height="24" rx="12" fill="#cbc38f"/><text x="1361" y="1037" font-size="17" class="ic" fill="#111" text-anchor="middle" textLength="19">87</text>
  </svg>
  <svg class="tray1" viewBox="1480 1010 75 70" width="75" height="70" fill="none" stroke="#fff"><path d="M1483.500 1048l7.500-7.500 7.500 7.500" stroke-width="2.200"/><path d="M1527.500 1044c0-13 16-15 21.500-5M1549.500 1032v7.500h-7.500M1528.500 1056v-7h7M1529 1050c2 4 6 6 10 5.500" stroke-width="1.500"/><circle cx="1545" cy="1050" r="6" fill="#ff9a0a" stroke="none"/></svg>
  <span class="ind">IND</span>
  <svg class="tray2" viewBox="1638 1010 102 70" width="102" height="70" fill="none" stroke="#fff" stroke-width="1.900">
    <path d="M1641.500 1041.500a16 16 0 0 1 23 0M1644.500 1045a12 12 0 0 1 17 0M1648 1048.500a7 7 0 0 1 10 0"/><circle cx="1653" cy="1050" r="2" fill="#fff" stroke="none"/>
    <path d="M1678 1040.500h4l5.500-5v17l-5.500-5h-4zM1690.500 1040.500c1.500 2 1.500 5 0 7M1693 1037c4 4 4 10 0 14"/><path d="M1696 1034c5 5 5 14 0 19" stroke="#555"/>
    <rect x="1714" y="1037" width="19" height="14.500" rx="3"/><path d="M1716.500 1039.500h5.500v9.500h-5.500z" fill="#fff" stroke="none"/><path d="M1735.500 1041.500v5" stroke-width="3"/>
  </svg>
  <div class="clock"><span>11.42</span><span>16/06/2024</span></div>
  <svg class="bell" viewBox="1866 1010 24 70" width="24" height="70" fill="#e5e0a8"><path d="M1868 1052l2-4v-6c0-12 16-12 16 0v6l2 4zM1873.500 1053.500h9c-1 3.500-8 3.500-9 0z"/></svg>
</footer>
</body>
</html>
```
FILE: styles.css
```css
* { box-sizing: border-box; }
body { margin: 0; width: 1920px; height: 1080px; overflow: hidden; background: #e6e6e6; font-family: "Open Sans", "Noto Sans", sans-serif; font-size: 17px; color: #262626; display: flex; flex-direction: column; white-space: nowrap; }
svg { display: block; flex: none; }
.defs { position: absolute; }
.ic { font-family: "Open Sans", sans-serif; }
.b { font-weight: 700; }
.sb { font-weight: 600; }
.serif { font-family: "Liberation Serif", serif; }

/* title bar */
.titlebar { height: 51px; background: #217346; color: #fff; display: flex; flex: none; }
.doc-title { width: 1323px; padding-left: 614px; line-height: 48px; letter-spacing: .15px; font-size: 17px; }
.signin { width: 85px; height: 30px; margin-top: 8px; padding: 0; border: 0; border-radius: 3px; background: #fff; color: #217346; font: 17px/30px "Open Sans", sans-serif; }

.tabs { height: 45px; flex: none; background: #217346; color: #fff; display: grid; grid-template-columns: 76px 15px 86px 83.500px 135px 112px 75.500px 93.500px 76px 75.500px 50px 936px 36px 70px; font-size: 16.800px; line-height: 43px; text-align: center; }
.tabs .t-file { padding-left: 12px; }
.tabs .active { background: #f3f3f3; color: #217346; }
.tabs .tell, .tabs .share { text-align: left; }
.tabs .tell { font-size: 17.100px; letter-spacing: .05px; }
.tabs .share { padding-left: 2px; line-height: 45px; font-size: 16.500px; }

/* ribbon */
.ribbon { height: 135px; flex: none; background: #f3f3f3; border-bottom: 1px solid #d0d0d0; display: flex; }
.group { display: grid; grid-template-rows: 110px 24px; background: linear-gradient(#b9b9b9, #b9b9b9) right 0 top 4px / 1px 126px no-repeat; }
.g-clip { width: 140px; } .g-font { width: 322px; } .g-align { width: 397px; } .g-num { width: 222px; } .g-styles { width: 295px; } .g-cells { width: 220px; } .g-edit { width: 210px; }
.body { display: flex; }
.body.col { flex-direction: column; padding: 12px 0 0 12px; }
.body.col > svg { margin-top: 11px; }
.cap { position: relative; text-align: center; font-size: 15.500px; line-height: 25px; letter-spacing: -.2px; color: #333; }
.lch { position: absolute; right: 7px; top: 8px; color: #b5b5b5; }
.lch.dark { color: #666; }
.g-clip .cap { padding-right: 26px; }
.g-font .cap { padding-right: 25px; }
.g-align .cap { padding-right: 23px; }
.g-num .cap { padding-right: 26px; }
.g-styles .cap, .g-cells .cap { padding-right: 2px; }
.g-edit .cap { padding-right: 3px; }
.big { display: flex; flex-direction: column; align-items: center; font-size: 16.800px; }
.big > span { height: 24px; line-height: 25px; }
.big .car { display: inline-block; vertical-align: 2px; margin-left: 1px; }
.car { fill: #555; }
.dim { color: #b1b1b1; }
.dim .car { fill: #b1b1b1; }
.paste { width: 50px; margin: 0 7px 0 19px; }
.paste svg:first-child { margin-left: 2px; }
.w113 { width: 113px; margin-left: 10px; } .w88 { width: 88px; } .w72 { width: 72px; }
.w64 { width: 64px; } .w66 { width: 66px; } .w68 { width: 68px; }
.g-cells .body { padding-left: 12px; }
.g-edit .body { padding-left: 11px; }
.g-edit .w68:nth-child(2) { margin-right: -2px; }
.row1 { display: flex; height: 37px; align-items: flex-end; }
.combo { height: 32px; border: 1px solid #c0c0c0; background: #fff; display: flex; align-items: center; justify-content: space-between; padding: 0 8px 0 4px; color: #444; }
.combo .car { margin-bottom: 3px; }
.fam { width: 166px; padding-right: 5px; }
.size { width: 65px; margin-left: -1px; padding-right: 5px; }
.num { width: 198px; justify-content: flex-end; padding-right: 5px; }
.num .car { fill: #b1b1b1; }
.g-align .body { padding-left: 13px; }
.wrapcol { padding: 17px 0 0 4px; color: #b1b1b1; }
.wraptext { display: flex; height: 32px; line-height: 32px; padding-left: 8px; gap: 4px; margin-bottom: 12px; letter-spacing: -.2px; }
.merge { width: 185px; height: 31px; background: #c6c6c6; display: flex; align-items: center; gap: 5px; padding-left: 5px; }
.collapse { margin: 117px 0 0 89px; }

/* formula bar */
.fbar { height: 65px; flex: none; display: flex; padding: 15px 7px 0; }
.namebox, .fx, .finput { height: 35px; border: 1px solid #c6c6c6; background: #fdfdfd; }
.namebox { width: 152px; display: flex; align-items: center; justify-content: space-between; padding: 0 10px 0 6px; color: #444; font-size: 18.500px; letter-spacing: .2px; }
.dots { margin: 9px 22px 0 20px; }
.fx { width: 164px; }
.finput { width: 1542px; margin-left: 4px; display: flex; justify-content: flex-end; align-items: center; padding: 2px 7px 0 0; }

/* worksheet */
.work { height: 646px; flex: none; display: grid; grid-template-columns: 1889px 31px; }
.sheet { border: 1px solid #999; display: grid; grid-template-columns: 19px 700px 1px 1167px; background: #fff; overflow: hidden; font-family: "Liberation Sans", Arial, sans-serif; font-kerning: none; color: #000; }
.gutter { background: #595959; padding-top: 255px; }
.gutter i { display: block; height: 1px; background: #999; }
.split { background: #999; }
.pane { min-width: 0; display: flex; flex-direction: column; }
.top { height: 113px; flex: none; display: flex; position: relative; }
.khaki { background: #948a54; }
.pink { background: #da9694; }
.kdcell { width: 243px; padding: 6px 0 0 6px; }
.kdbtn { width: 157px; height: 94px; border-radius: 17px; background: #a0d9ea; box-shadow: inset 0 0 0 5px #2c4b73, inset 0 3px 2px 3px #3c6494, inset -4px -3px 3px 4px #1c3553, inset 0 12px 8px 2px #d4ffff, inset 0 -12px 10px 1px #7fa9ba; color: #00f; font-weight: 700; text-align: center; }
.kdbtn span, .kdbtn b { display: block; font-size: 27px; line-height: 36px; }
.kdbtn span { padding-top: 10px; }
.kdbtn b { font-size: 33px; line-height: 35px; }
.redbox { width: 457px; height: 96px; background: #f00; color: #fff; display: flex; flex-direction: column; align-items: center; padding-top: 15px; font-family: Inter, sans-serif; font-weight: 900; font-size: 20.500px; line-height: 32px; letter-spacing: .4px; word-spacing: 4px; }
.redbox span { transform: scaleX(1.052); }
.hdr { display: grid; background: #00ee6c; border-top: 2px solid #000; height: 142px; flex: none; }
.c { border-right: 1px solid #000; border-bottom: 1px solid #000; display: flex; align-items: center; justify-content: center; font-weight: 700; font-size: 30px; overflow: hidden; padding-top: 2px; }
.lefthdr { grid-template: 61px 79px / 64px 179px 404px 52px; border-left: 2px solid #000; margin-left: -1px; width: 701px; }
.kelas { grid-column: span 2; }
.smt { grid-column: span 2; border-right: 0; }
.c.smt { font-size: 29.900px; padding-right: 1px; }
.c.h { font-size: 27.500px; }
.c.nama { letter-spacing: -.6px; }
.lp { border-right: 0; }
.righthdr { grid-template: 61px 40px 39px / repeat(8, 62px) repeat(5, 79px) 276px; }
.righthdr .guru { grid-column: 1 / 5; }
.righthdr .dra { grid-column: 5 / 14; justify-content: flex-start; padding-left: 4px; }
.righthdr .aspek { grid-column: 14; font-size: 42.500px; justify-content: flex-start; padding-left: 89px; border-right: 0; }
.righthdr .nproses { grid-column: 1 / 9; grid-row: 2; font-weight: 400; font-size: 28.700px; align-items: baseline; padding-top: 5px; }
.nproses span { font-size: 22.900px; }
.righthdr .p { grid-row: 2; font-size: 27.500px; padding: 0; }
.righthdr .tall { grid-row: 2 / 4; border-bottom: 0; }
.righthdr .hpa { grid-column: 12; }
.righthdr .pre { grid-column: 13; }
.righthdr .end { grid-column: 14; border-right: 0; border-bottom: 1px solid #000; }
.righthdr .s { grid-row: 3; font-size: 22.700px; border-bottom: 0; padding: 0; }
.righthdr .v { grid-row: 3; font-size: 30.400px; border-bottom: 0; background: #fff; color: #06f; padding-top: 2px; }
.freeze { height: 1px; flex: none; background: #999; }
.orange { height: 43px; flex: none; background: #f79646; }
.notes { flex: 1; background: #b7dee8; }
.seg { display: block; width: 180px; height: 1px; background: #000; margin-left: 64px; }
.notes h2 { margin: 56px 0 -1px 7px; font-size: 32.500px; line-height: 49px; color: #c00000; }
.notes p { margin: 0 0 0 70px; font-size: 29.950px; line-height: 49px; }
.notes .sm { font-size: 27.200px; margin-left: 69px; }

.titles { width: 891px; text-align: center; font-weight: 700; font-size: 32.550px; padding-top: 1px; }
.l1 { line-height: 50px; padding: 0 87px 0 0; }
.l2 { line-height: 49px; padding-right: 86px; font-size: 32.400px; }
.yellow { width: 277px; height: 96px; margin-left: -1px; background: #ff0; font-size: 27.300px; line-height: 35px; overflow: hidden; padding-top: 12px; }
.y1 { padding-left: 33px; }
.y2 { padding-left: 90px; }
.menubtn { position: absolute; left: 671px; top: 45px; width: 191px; height: 58px; border: 12px solid; border-color: #b0ad66 #a5a35c #d9cd93 #a5a35c; background: #bdb76b; box-shadow: 0 0 12px 5px rgba(190, 180, 90, .8), inset 0 0 6px 2px #bdb56c; outline: 1px solid #7c8044; outline-offset: -1px; color: #00f; font-weight: 700; font-size: 32.300px; line-height: 35px; text-align: center; }

.kd { flex: 1; position: relative; display: grid; grid-template: 56px repeat(6, 49px) / 62px 62px 1043px; font-size: 27.200px; overflow: hidden; }
.segs { position: absolute; left: 0; top: 0; }
.kd > div { display: flex; align-items: center; justify-content: center; border-bottom: 1px solid #8db0dc; border-right: 1px solid #8db0dc; overflow: hidden; padding-top: 2px; }
.kd > .n { background: #c0504d; border-color: #366092; }
.kd > .k { color: #00f; }
.kd > .m { color: #00f; justify-content: flex-start; padding-left: 4px; border-right: 0; }
.kd > .kh { background: #c0504d; color: #000; font-weight: 700; border-color: #366092; font-size: 27.500px; padding-top: 2px; }
.kd > .kh.n { padding-right: 16px; }
.kd > .kh.m { padding-left: 330px; padding-top: 4px; font-size: 32.650px; }
.kh em { font-style: normal; color: #ff0; }
.kd > .sel { border: 2px solid #217346; border-right: 0; margin: -2px 0 -1px -2px; z-index: 1; }

/* scroll bars */
.vscroll { padding: 1px 3px; display: flex; flex-direction: column; }
.sbtn { width: 25px; height: 25px; border: 1px solid #c0c0c0; background: #fff; display: flex; align-items: center; justify-content: center; flex: none; }
.vthumb { flex: 1; margin-top: 1px; border: 1px solid #ababab; background: #fff; }
.hscroll { height: 34px; flex: none; padding: 3px 31px 5px 1px; border-bottom: 1px solid #c6c6c6; background: linear-gradient(#999, #999) 720px 0 / 1px 100% no-repeat; }
.htrack { height: 25px; background: #dadada; display: flex; }
.hthumb { width: 117px; border: 1px solid #ababab; background: #fff; }
.sbtn.r { margin-left: auto; }

/* status bar */
.status { height: 32px; flex: none; background: #f3f3f3; display: flex; padding-left: 1536px; }
.view { width: 45px; display: flex; align-items: center; justify-content: center; padding-bottom: 1px; }
.view.on { background: #c6c6c6; }
.pct { line-height: 31px; font-size: 15.700px; color: #444; margin-left: 5px; letter-spacing: -.1px; }

/* taskbar */
.taskbar { height: 72px; flex: none; border-top: 2px solid #444446; background: linear-gradient(90deg, #202127 0, #202127 140px, #23261f 200px, #23261f 270px, #202127 350px, #202024 1000px, #292618 1160px, #292618 1260px, #212121 1390px, #202127 1700px); display: flex; color: #fff; }
.coins { margin-left: 28px; }
.win { margin: 17px 22px 0 320px; }
.search { width: 326px; height: 44px; margin-top: 12px; border-radius: 22px; background: #f3f3f3; color: #666; display: flex; align-items: center; padding-left: 15px; gap: 14px; font-size: 19.500px; letter-spacing: -.2px; }
.apps { margin-left: 9px; }
.tray1 { margin-left: 90px; }
.ind { margin-left: 25px; width: 32px; line-height: 69px; font-size: 17.500px; }
.tray2 { margin-left: 26px; }
.clock { width: 115px; text-align: right; font-size: 17.500px; line-height: 24px; padding-top: 10px; display: flex; flex-direction: column; }
.bell { margin-left: 11px; }
```
